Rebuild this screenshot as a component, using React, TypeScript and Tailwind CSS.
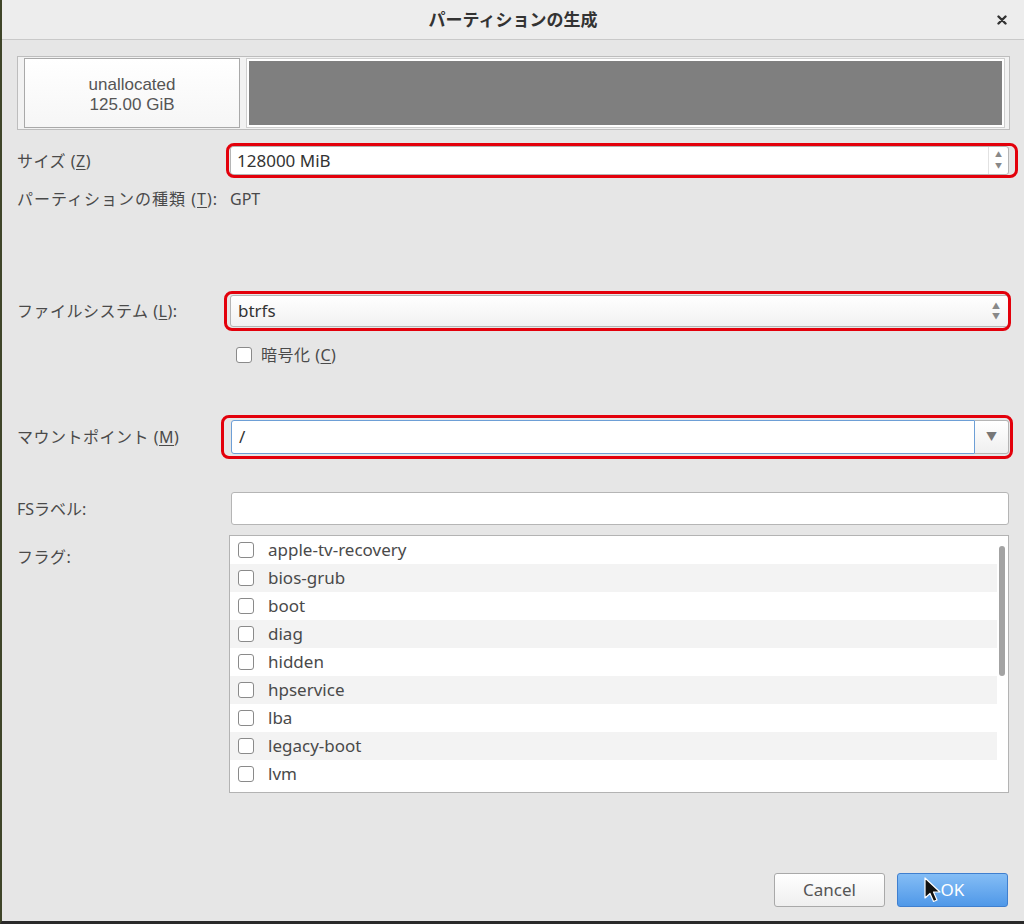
import React from 'react';

const jp = { fontFamily: '"Noto Sans", "Noto Sans CJK JP", sans-serif' };

const flags = [
  'apple-tv-recovery',
  'bios-grub',
  'boot',
  'diag',
  'hidden',
  'hpservice',
  'lba',
  'legacy-boot',
  'lvm',
];

function Mn({ c }: { c: string }) {
  return (
    <span>
      (<span className="underline underline-offset-2">{c}</span>)
    </span>
  );
}

function Check() {
  return <span className="block h-[16px] w-[16px] shrink-0 rounded-[3px] border border-[#8a8a8a] bg-white" />;
}

function Red({ cls }: { cls: string }) {
  return <div className={'pointer-events-none absolute rounded-[8px] border-[3px] border-[#e3000b] ' + cls} />;
}

export default function App() {
  return (
    <div
      className="relative flex h-[924px] w-[1024px] flex-col overflow-hidden border-b-[3px] border-l-2 border-b-[#2a2a2a] border-l-[#3f4529] bg-[#e6e6e6] text-[16px] text-[#4a4a4a]"
      style={jp}
    >
      {/* title bar */}
      <div className="relative flex h-[40px] shrink-0 items-center justify-center border-b border-[#c9c9c9] bg-[#ededed]">
        <span className="text-[17px] font-bold text-[#333]">パーティションの生成</span>
        <svg className="absolute right-[17px] top-[15px]" width="10" height="10" viewBox="0 0 10 10">
          <path d="M1.5 1.5 L8.5 8.5 M8.5 1.5 L1.5 8.5" stroke="#333" strokeWidth="2.4" strokeLinecap="round" />
        </svg>
      </div>

      <div className="flex flex-col pl-[15px] pr-[15px]">
        {/* partition graphic */}
        <div className="mt-[16px] flex h-[74px] w-[993px] items-stretch border border-[#bdbdbd] bg-[#f2f2f2] pl-[6px] pr-[4px] pt-[1px] pb-[1px]">
          <div
            className="flex w-[216px] flex-col items-center justify-center border border-[#a9a9a9] bg-gradient-to-b from-white to-[#f6f6f6] pt-[3px] text-[17px] leading-[20px] text-[#555]"
            style={{ fontFamily: '"Liberation Sans", Arial, sans-serif' }}
          >
            <span>unallocated</span>
            <span>125.00 GiB</span>
          </div>
          <div className="ml-[6px] flex flex-1 border border-[#cfcfcf] bg-white p-[2px]">
            <div className="flex-1 bg-[#7f7f7f]" />
          </div>
        </div>

        {/* size */}
        <div className="mt-[16px] flex h-[29px] items-center">
          <span className="w-[213px] tracking-[0.5px]">
            サイズ <Mn c="Z" />
          </span>
          <div className="relative flex h-full flex-1 items-stretch rounded-[3px] border border-[#b5b5b5] bg-white">
            <span className="flex flex-1 items-center pl-[6px] text-[17px] text-[#333]">128000 MiB</span>
            <div className="flex w-[20px] flex-col items-center justify-center gap-[3px] border-l border-[#e2e2e2] text-[7px] leading-[8px] text-[#888]">
              <span>▲</span>
              <span>▼</span>
            </div>
            <Red cls="left-[-5px] right-[-10px] top-[-4px] bottom-[-4px]" />
          </div>
        </div>

        {/* type */}
        <div className="mt-[14px] flex h-[20px] items-center">
          <span className="tracking-[1px]">
            パーティションの種類 <Mn c="T" />:
          </span>
          <span className="ml-[12px]">GPT</span>
        </div>

        {/* file system */}
        <div className="mt-[86px] flex h-[32px] items-center">
          <span className="w-[213px] tracking-[0.5px]">
            ファイルシステム <Mn c="L" />:
          </span>
          <div className="relative flex h-full flex-1 items-center rounded-[3px] border border-[#b5b5b5] bg-gradient-to-b from-white to-[#f1f1f1]">
            <span className="flex-1 pl-[7px] text-[17px] text-[#333]">btrfs</span>
            <div className="mr-[8px] flex flex-col items-center text-[8px] leading-[10px] text-[#888]">
              <span>▲</span>
              <span>▼</span>
            </div>
            <Red cls="left-[-7px] right-[-3px] top-[-5px] bottom-[-5px]" />
          </div>
        </div>

        {/* encrypt */}
        <div className="mt-[18px] flex h-[20px] items-center pl-[219px]">
          <Check />
          <span className="ml-[9px] tracking-[0.5px]">
            暗号化 <Mn c="C" />
          </span>
        </div>

        {/* mount point */}
        <div className="mt-[55px] flex h-[34px] items-center">
          <span className="w-[214px] tracking-[0.5px]">
            マウントポイント <Mn c="M" />
          </span>
          <div className="relative flex h-full flex-1 items-stretch">
            <div className="flex flex-1 items-center rounded-l-[3px] border border-[#6d9fd6] bg-white pl-[7px] text-[17px] text-[#333]">/</div>
            <div className="flex w-[34px] items-center justify-center rounded-r-[3px] border border-l-0 border-[#b5b5b5] bg-gradient-to-b from-white to-[#efefef] text-[11px] text-[#777]">
              ▼
            </div>
            <Red cls="left-[-10px] right-[-4px] top-[-5px] bottom-[-5px]" />
          </div>
        </div>

        {/* fs label */}
        <div className="mt-[38px] flex h-[33px] items-center">
          <span className="w-[214px]">FSラベル:</span>
          <div className="h-full flex-1 rounded-[3px] border border-[#b5b5b5] bg-white" />
        </div>

        {/* flags */}
        <div className="mt-[10px] flex h-[258px]">
          <span className="w-[212px] pt-[10px] tracking-[0.5px]">フラグ:</span>
          <div className="flex flex-1 border border-[#b3b3b3] bg-white">
            <div className="flex flex-1 flex-col">
              {flags.map((f, i) => (
                <div key={f} className={'flex h-[28px] shrink-0 items-center pl-[8px] ' + (i % 2 ? 'bg-[#f3f3f3]' : 'bg-white')}>
                  <Check />
                  <span className="ml-[14px] text-[17px] text-[#4a4a4a]">{f}</span>
                </div>
              ))}
            </div>
            <div className="w-[11px] pl-[2px] pt-[10px]">
              <div className="h-[130px] w-[6px] rounded-full bg-[#a3a3a3]" />
            </div>
          </div>
        </div>

        {/* buttons */}
        <div className="mt-[80px] flex justify-end gap-[12px] pr-[1px]">
          <button className="flex h-[34px] w-[111px] items-center justify-center rounded-[3px] border border-[#a9a9a9] bg-gradient-to-b from-white to-[#efefef] text-[17px] text-[#555]">
            Cancel
          </button>
          <button className="flex h-[34px] w-[111px] items-center justify-center rounded-[3px] border border-[#3f7fcf] bg-gradient-to-b from-[#84bdf5] to-[#4f98e8] text-[17px] text-white">
            OK
          </button>
        </div>
      </div>

      {/* mouse pointer */}
      <svg className="absolute left-[922px] top-[877px]" width="20" height="28" viewBox="0 0 20 28">
        <path d="M1 1 L1 21 L6 16.5 L9.5 24.5 L13 23 L9.5 15 L16 15 Z" fill="#111" stroke="#fff" strokeWidth="1.2" strokeLinejoin="round" />
      </svg>
    </div>
  );
}
